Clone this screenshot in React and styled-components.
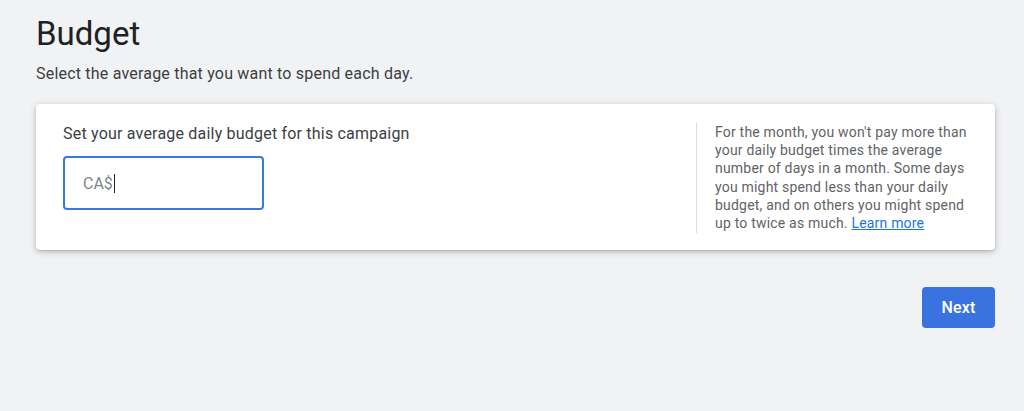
import React from "react";
import styled, { createGlobalStyle } from "styled-components";

const GlobalStyle = createGlobalStyle`
  html, body {
    margin: 0;
    padding: 0;
    background: #f1f2f4;
  }
  body {
    font-family: Roboto, "Liberation Sans", Arial, sans-serif;
    color: #3c4043;
  }
`;

const Page = styled.main`
  width: 1024px;
  height: 411px;
  box-sizing: border-box;
  padding: 13px 29px 0 36px;
  background: #f1f2f4;
`;

const Title = styled.h1`
  margin: 0;
  font-size: 33px;
  font-weight: 400;
  line-height: 42px;
  color: #202124;
`;

const Subtitle = styled.p`
  margin: 8px 0 0;
  font-size: 16px;
  letter-spacing: 0.2px;
  line-height: 22px;
  color: #3c4043;
`;

const Card = styled.section`
  margin-top: 19px;
  height: 146px;
  box-sizing: border-box;
  background: #fff;
  border-radius: 4px;
  box-shadow: 0 2px 6px rgba(60, 64, 67, 0.3), 0 1px 2px rgba(60, 64, 67, 0.15);
  display: flex;
  padding: 19px 26px 0 27px;
`;

const Main = styled.div`
  flex: 1;
`;

const Label = styled.div`
  font-size: 16px;
  letter-spacing: 0.2px;
  line-height: 22px;
  color: #3c4043;
`;

const InputBox = styled.div`
  margin-top: 11px;
  width: 201px;
  height: 54px;
  box-sizing: border-box;
  border: 2px solid #3b78e7;
  border-radius: 4px;
  display: flex;
  align-items: center;
  padding-left: 18px;
  font-size: 16px;
  color: #80868b;
`;

const Caret = styled.span`
  display: inline-block;
  width: 1px;
  height: 19px;
  background: #202124;
  margin-left: 1px;
`;

const Aside = styled.aside`
  width: 254px;
  height: 110px;
  border-left: 1px solid #dadce0;
  padding-left: 18px;
  font-size: 14px;
  letter-spacing: 0.2px;
  line-height: 18.2px;
  color: #5f6368;
`;

const Link = styled.a`
  color: #1a73e8;
  text-decoration: underline;
`;

const Footer = styled.div`
  display: flex;
  justify-content: flex-end;
  margin-top: 37px;
`;

const Button = styled.button`
  width: 73px;
  height: 41px;
  border: none;
  border-radius: 4px;
  background: #3a73e0;
  color: #fff;
  font-family: inherit;
  font-size: 16px;
  font-weight: 500;
  letter-spacing: 0.2px;
  cursor: pointer;
`;

export default function App() {
  return (
    <>
      <GlobalStyle />
      <Page>
        <Title>Budget</Title>
        <Subtitle>Select the average that you want to spend each day.</Subtitle>
        <Card>
          <Main>
            <Label>Set your average daily budget for this campaign</Label>
            <InputBox>
              CA$
              <Caret />
            </InputBox>
          </Main>
          <Aside>
            For the month, you won't pay more than your daily budget times the
            average number of days in a month. Some days you might spend less
            than your daily budget, and on others you might spend up to twice as
            much. <Link href="#">Learn more</Link>
          </Aside>
        </Card>
        <Footer>
          <Button>Next</Button>
        </Footer>
      </Page>
    </>
  );
}
